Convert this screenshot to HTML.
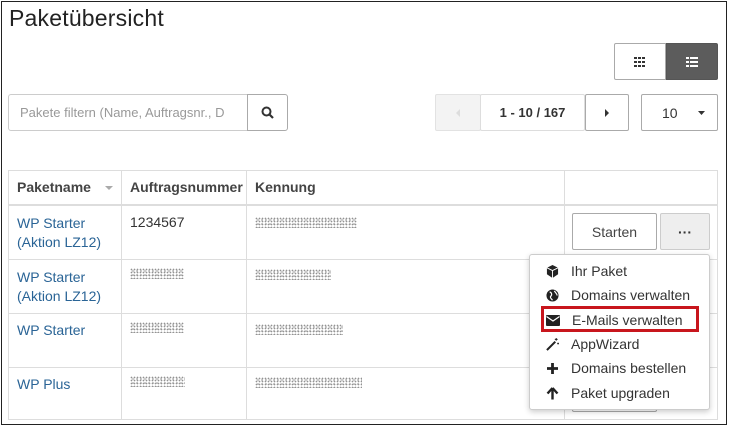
<!DOCTYPE html>
<html><head><meta charset="utf-8"><style>
*{box-sizing:border-box;margin:0;padding:0}
body{width:729px;height:427px;background:#fff;font-family:"Liberation Sans",sans-serif;color:#333;position:relative;overflow:hidden}
.frame{position:absolute;left:1px;top:1px;width:726px;height:424px;border:1.5px solid #222}
.abs{position:absolute}
h1{position:absolute;left:9px;top:5px;font-size:23px;font-weight:normal;color:#222;letter-spacing:0.2px}
.btn{position:absolute;border:1px solid #aaa;background:#fff;border-radius:2px;display:flex;align-items:center;justify-content:center;font-size:14px}
.blur{display:inline-block;height:11px;background:radial-gradient(circle,#777 0.6px,transparent 1.1px) 0 0/3px 3px,radial-gradient(circle,#aaa 0.7px,transparent 1.2px) 1px 1px/4px 4px;opacity:.8}
.cell{position:absolute;font-size:14px}
.link{color:#2a6496}
.line{position:absolute;background:#ddd}
.menu{position:absolute;left:529px;top:254px;width:181px;height:156px;background:#fff;border:1px solid #ccc;box-shadow:0 2px 6px rgba(0,0,0,.2);border-radius:3px}
.mi{position:absolute;left:16px;font-size:14px;color:#333;display:flex;align-items:center}
.mi svg{margin-right:12px}
</style></head><body>
<div class="frame"></div>
<h1>Paketübersicht</h1>
<div class="btn" style="left:614px;top:43px;width:52px;height:37px;border-radius:2px 0 0 2px"><svg width="12" height="10"><g fill="#333"><rect x="0" y="0" width="3" height="2"/><rect x="4" y="0" width="3" height="2"/><rect x="8" y="0" width="3" height="2"/><rect x="0" y="4" width="3" height="2"/><rect x="4" y="4" width="3" height="2"/><rect x="8" y="4" width="3" height="2"/><rect x="0" y="8" width="3" height="2"/><rect x="4" y="8" width="3" height="2"/><rect x="8" y="8" width="3" height="2"/></g></svg></div>
<div class="btn" style="left:666px;top:43px;width:52px;height:37px;background:#5c5c5c;border-color:#555;border-radius:0 2px 2px 0"><svg width="12" height="10"><g fill="#fff"><rect x="0" y="0" width="3" height="2"/><rect x="4" y="0" width="8" height="2"/><rect x="0" y="4" width="3" height="2"/><rect x="4" y="4" width="8" height="2"/><rect x="0" y="8" width="3" height="2"/><rect x="4" y="8" width="8" height="2"/></g></svg></div>
<div class="btn" style="left:8px;top:94px;width:240px;height:37px;justify-content:flex-start;padding-left:11px;color:#999;font-size:13px;border-color:#ccc;border-radius:3px 0 0 3px">Pakete filtern (Name, Auftragsnr., D</div>
<div class="btn" style="left:247px;top:94px;width:41px;height:37px;border-radius:0 3px 3px 0"><svg width="13" height="13"><circle cx="5.5" cy="5.5" r="4" fill="none" stroke="#333" stroke-width="2"/><path d="M8.5 8.5L12 12" stroke="#333" stroke-width="2.2"/></svg></div>
<div class="btn" style="left:435px;top:94px;width:46px;height:37px;background:#f3f3f3;border-color:#e2e2e2"><svg width="5" height="8"><path d="M4 0L0 4L4 8Z" fill="#ddd"/></svg></div>
<div class="btn" style="left:480px;top:94px;width:105px;height:37px;font-weight:bold;font-size:13px;border-color:#ddd">1 - 10 / 167</div>
<div class="btn" style="left:585px;top:94px;width:44px;height:37px"><svg width="5" height="8"><path d="M0 0L4 4L0 8Z" fill="#333"/></svg></div>
<div class="btn" style="left:641px;top:94px;width:77px;height:37px;justify-content:space-between;padding:0 12px 0 20px;font-size:14px">10<svg width="7" height="4"><path d="M0 0H7L3.5 4Z" fill="#333"/></svg></div>
<div class="line" style="left:8px;top:170px;width:710px;height:1px"></div>
<div class="line" style="left:8px;top:204px;width:710px;height:2px"></div>
<div class="line" style="left:8px;top:259px;width:710px;height:1px"></div>
<div class="line" style="left:8px;top:313px;width:710px;height:1px"></div>
<div class="line" style="left:8px;top:367px;width:710px;height:1px"></div>
<div class="line" style="left:8px;top:419px;width:710px;height:1px"></div>
<div class="line" style="left:8px;top:170px;width:1px;height:250px"></div>
<div class="line" style="left:121px;top:170px;width:1px;height:250px"></div>
<div class="line" style="left:246px;top:170px;width:1px;height:250px"></div>
<div class="line" style="left:564px;top:170px;width:1px;height:250px"></div>
<div class="line" style="left:717px;top:170px;width:1px;height:250px"></div>
<div class="cell" style="left:17px;top:179px;font-weight:bold;color:#444">Paketname</div>
<svg class="abs" style="left:105px;top:186px" width="8" height="4"><path d="M0 0H8L4 4Z" fill="#aaa"/></svg>
<div class="cell" style="left:130px;top:179px;font-weight:bold;color:#444">Auftragsnummer</div>
<div class="cell" style="left:255px;top:179px;font-weight:bold;color:#444">Kennung</div>
<div class="cell link" style="left:17px;top:214px;line-height:19px">WP Starter<br>(Aktion LZ12)</div>
<div class="cell" style="left:130px;top:214px">1234567</div>
<div class="abs blur" style="left:255px;top:217px;width:102px"></div>
<div class="cell link" style="left:17px;top:268px;line-height:19px">WP Starter<br>(Aktion LZ12)</div>
<div class="abs blur" style="left:130px;top:268px;width:54px"></div>
<div class="abs blur" style="left:255px;top:269px;width:76px"></div>
<div class="cell link" style="left:17px;top:322px">WP Starter</div>
<div class="abs blur" style="left:130px;top:322px;width:54px"></div>
<div class="abs blur" style="left:255px;top:324px;width:88px"></div>
<div class="cell link" style="left:17px;top:376px">WP Plus</div>
<div class="abs blur" style="left:130px;top:376px;width:55px"></div>
<div class="abs blur" style="left:255px;top:377px;width:107px"></div>
<div class="btn" style="left:572px;top:213px;width:85px;height:37px;color:#444">Starten</div>
<div class="btn" style="left:660px;top:213px;width:50px;height:37px;background:#eee;border-color:#ccc;font-weight:bold">···</div>
<div class="btn" style="left:572px;top:390px;width:85px;height:22px"></div>
<div class="menu">
<div class="mi" style="top:8px"><svg width="13" height="13" viewBox="0 0 14 14"><path d="M7 0L13 3V10L7 14L1 10V3Z" fill="#222"/><path d="M7 6L13 3M7 6L1 3M7 6V14" stroke="#fff" stroke-width="1"/></svg>Ihr Paket</div>
<div class="mi" style="top:32px"><svg width="13" height="13" viewBox="0 0 14 14"><circle cx="7" cy="7" r="6.5" fill="#222"/><path d="M4 3C6 4 7 6 5 8C4 9 6 11 7 12M9 2C10 4 12 5 12 7" stroke="#fff" stroke-width="1.3" fill="none"/></svg>Domains verwalten</div>
<div class="mi" style="top:57px"><svg width="14" height="11" viewBox="0 0 14 11"><rect x="0" y="0" width="14" height="11" rx="1" fill="#222"/><path d="M0.5 1.5L7 6L13.5 1.5" stroke="#fff" stroke-width="1.2" fill="none"/></svg>E-Mails verwalten</div>
<div class="mi" style="top:81px"><svg width="13" height="13" viewBox="0 0 14 14"><path d="M1 13L10 4" stroke="#222" stroke-width="2.2"/><path d="M11 0V3M9.5 1.5H12.5M13 5V7M12 6H14" stroke="#222" stroke-width="1"/></svg>AppWizard</div>
<div class="mi" style="top:105px"><svg width="13" height="13"><path d="M6.5 1V12M1 6.5H12" stroke="#222" stroke-width="2.8"/></svg>Domains bestellen</div>
<div class="mi" style="top:130px"><svg width="13" height="13"><path d="M6.5 1L1.5 6.5M6.5 1L11.5 6.5M6.5 1.5V12.5" stroke="#222" stroke-width="2.4" fill="none"/></svg>Paket upgraden</div>
</div>
<div class="abs" style="left:541px;top:306px;width:158px;height:26px;border:3px solid #c8161d"></div>
</body></html>
